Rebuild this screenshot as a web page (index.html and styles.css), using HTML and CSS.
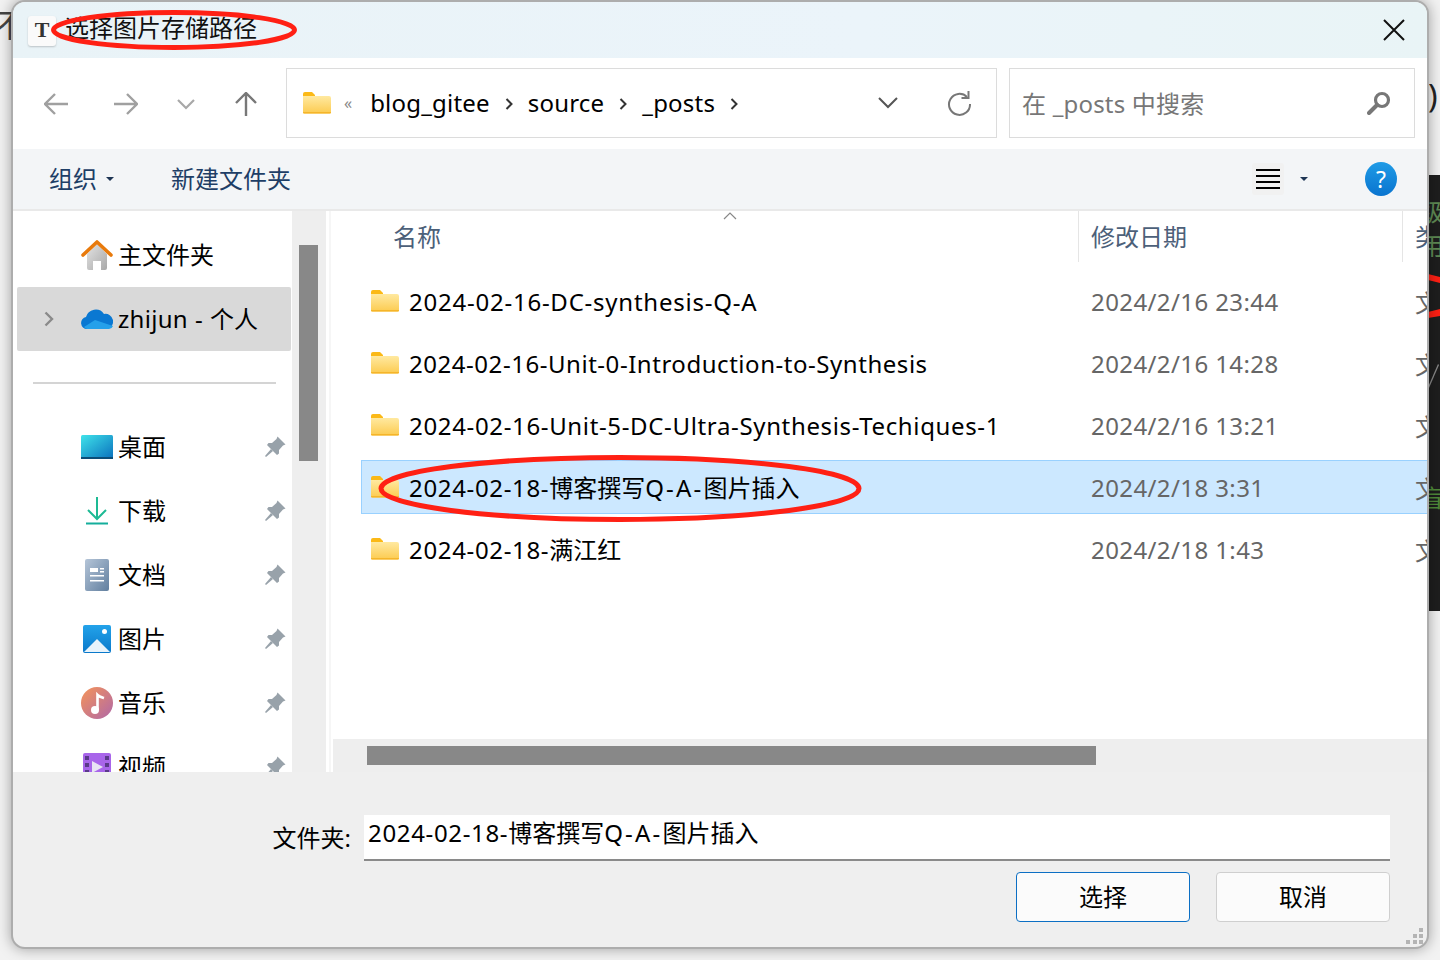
FILE: index.html
```html
<!DOCTYPE html>
<html lang="zh">

<head>
    <meta charset="utf-8" />
    <title>选择图片存储路径</title>
    <link rel="stylesheet" href="styles.css">
</head>

<body>
    <svg class="defs" width="0" height="0">
        <defs>
            <linearGradient id="gFolder" x1="0" y1="0" x2="0" y2="1">
                <stop offset="0" stop-color="#ffe9a0" />
                <stop offset="1" stop-color="#fccb50" />
            </linearGradient>
            <linearGradient id="gHome" x1="0" y1="0" x2="1" y2="1">
                <stop offset="0" stop-color="#e3e3e3" />
                <stop offset="1" stop-color="#a8a8a8" />
            </linearGradient>
            <linearGradient id="gDesk" x1="0" y1="0" x2="1" y2="1">
                <stop offset="0" stop-color="#3fe3ea" />
                <stop offset="1" stop-color="#0a70bd" />
            </linearGradient>
            <linearGradient id="gDoc" x1="0" y1="0" x2="1" y2="1">
                <stop offset="0" stop-color="#b5c5d8" />
                <stop offset="1" stop-color="#617f9f" />
            </linearGradient>
            <linearGradient id="gPic" x1="0" y1="0" x2="0" y2="1">
                <stop offset="0" stop-color="#23a3ea" />
                <stop offset="1" stop-color="#0a78ca" />
            </linearGradient>
            <linearGradient id="gMusic" x1="0" y1="0" x2="1" y2="1">
                <stop offset="0" stop-color="#f59458" />
                <stop offset="1" stop-color="#b068a8" />
            </linearGradient>
            <symbol id="folder" viewBox="0 0 28 22">
                <path d="M0 2a2 2 0 0 1 2-2h7l3 3v2H0z" fill="#fbb917" />
                <path d="M0 4h26a2 2 0 0 1 2 2v14a1.500 1.500 0 0 1-1.500 1.500h-25A1.500 1.500 0 0 1 0 20z" fill="url(#gFolder)" />
                <path d="M0 20h28v.5a1 1 0 0 1-1 1H1a1 1 0 0 1-1-1z" fill="#f5b52a" />
            </symbol>
            <symbol id="pin" viewBox="0 0 22 22">
                <path d="M13.500.5l8 8-2.500 1-4 4.500v3.500l-2 1.500-10-10 1.500-2H8l4.500-4z" fill="#98a2aa" />
                <path d="M7 13l-6 7 1 1 7-6z" fill="#98a2aa" />
            </symbol>
        </defs>
    </svg>

    <!-- 背后的窗口 -->
    <div class="behind-glyph">不</div>
    <div class="behind-paren">)</div>
    <div class="behind-panel">
        <div class="behind-green">级<br>用</div>
        <div class="behind-green behind-green-2">盲</div>
        <svg class="behind-strokes" width="12" height="436" viewBox="0 0 12 436">
            <path d="M0 99l12 3v6L0 105z" fill="#ff2014" />
            <path d="M0 137l12-3v7L0 143z" fill="#ff2014" />
            <path d="M0 212l10-23 1 1-10 23z" fill="#8a8a8a" />
        </svg>
    </div>

    <div class="dialog">
        <div class="titlebar">
            <div class="app-icon">T</div>
            <div class="title-text">选择图片存储路径</div>
            <svg class="close-icon" width="22" height="22" viewBox="0 0 22 22">
                <path d="M1 1l20 20M21 1L1 21" stroke="#111" stroke-width="2" fill="none" />
            </svg>
        </div>

        <div class="navbar">
            <svg class="nav-btn" width="24" height="24" viewBox="0 0 24 24">
                <path d="M24 12H1M11 2L1 12l10 10" stroke="#a0a0a0" stroke-width="2.400" fill="none" />
            </svg>
            <svg class="nav-btn nav-forward" width="24" height="24" viewBox="0 0 24 24">
                <path d="M0 12h23M13 2l10 10-10 10" stroke="#a0a0a0" stroke-width="2.400" fill="none" />
            </svg>
            <svg class="nav-btn nav-down" width="18" height="12" viewBox="0 0 18 12">
                <path d="M1 2l8 8 8-8" stroke="#a8a8a8" stroke-width="2.200" fill="none" />
            </svg>
            <svg class="nav-btn nav-up" width="24" height="24" viewBox="0 0 24 24">
                <path d="M12 24V1M2 11L12 1l10 10" stroke="#787878" stroke-width="2.400" fill="none" />
            </svg>

            <div class="address">
                <svg class="addr-folder" width="28" height="22"><use href="#folder" /></svg>
                <span class="addr-more">«</span>
                <span class="crumb">blog_gitee</span>
                <svg class="crumb-sep" width="8" height="12" viewBox="0 0 8 12"><path d="M1.500 1l5 5-5 5" stroke="#333" stroke-width="2" fill="none" /></svg>
                <span class="crumb">source</span>
                <svg class="crumb-sep" width="8" height="12" viewBox="0 0 8 12"><path d="M1.500 1l5 5-5 5" stroke="#333" stroke-width="2" fill="none" /></svg>
                <span class="crumb">_posts</span>
                <svg class="crumb-sep" width="8" height="12" viewBox="0 0 8 12"><path d="M1.500 1l5 5-5 5" stroke="#333" stroke-width="2" fill="none" /></svg>
                <svg class="addr-down" width="20" height="12" viewBox="0 0 20 12"><path d="M1 1l9 9 9-9" stroke="#555" stroke-width="2" fill="none" /></svg>
                <svg class="addr-refresh" width="24" height="26" viewBox="0 0 24 26">
                    <path d="M20 7a10.500 10.500 0 1 0 3 7" stroke="#777" stroke-width="2" fill="none" />
                    <path d="M21.500 1v7h-7" stroke="#777" stroke-width="2" fill="none" />
                </svg>
            </div>

            <div class="search">
                <span class="search-text">在 _posts 中搜索</span>
                <svg width="24" height="24" viewBox="0 0 24 24">
                    <circle cx="15" cy="9" r="6.500" stroke="#777" stroke-width="3.200" fill="none" />
                    <path d="M10 14l-8 8" stroke="#777" stroke-width="4" stroke-linecap="round" />
                </svg>
            </div>
        </div>

        <div class="toolbar">
            <span class="tool-text">组织</span>
            <span class="caret caret-org"></span>
            <span class="tool-text tool-new">新建文件夹</span>
            <div class="view-btn">
                <span class="view-line"></span>
                <span class="view-line"></span>
                <span class="view-line"></span>
                <span class="view-line"></span>
            </div>
            <span class="caret caret-view"></span>
            <div class="help-btn">?</div>
        </div>

        <div class="main">
            <div class="sidebar">
                <div class="side-row">
                    <svg class="side-icon" width="32" height="32" viewBox="0 0 32 32">
                        <path d="M6 15L16 5l10 10v14a2 2 0 0 1-2 2h-4v-9h-8v9H8a2 2 0 0 1-2-2z" fill="url(#gHome)" />
                        <path d="M2 16L16 3l14 13" stroke="#e87a0c" stroke-width="3.600" fill="none" stroke-linecap="round" stroke-linejoin="round" />
                    </svg>
                    <span class="side-label">主文件夹</span>
                </div>
                <div class="side-row side-active">
                    <svg class="side-arrow" width="10" height="16" viewBox="0 0 10 16">
                        <path d="M1.500 1.500L8 8l-6.500 6.500" stroke="#8a8a8a" stroke-width="2.400" fill="none" />
                    </svg>
                    <svg class="side-icon" width="32" height="22" viewBox="0 0 32 22">
                        <path d="M6 21a6 6 0 0 1-1-11.900A10 10 0 0 1 23 6a7 7 0 0 1 3 15z" fill="#0a78d2" />
                        <path d="M6 21a5.500 5.500 0 0 1-3-2l11-7 18 6a4.500 4.500 0 0 1-4 3z" fill="#25a0ea" />
                    </svg>
                    <span class="side-label side-latin">zhijun - <span class="cjk">个人</span></span>
                </div>
                <div class="side-divider"></div>
                <div class="side-row">
                    <svg class="side-icon" width="32" height="24" viewBox="0 0 32 24">
                        <rect width="32" height="24" rx="1.500" fill="url(#gDesk)" />
                        <rect y="22" width="32" height="2" fill="#0b4d78" />
                    </svg>
                    <span class="side-label">桌面</span>
                    <svg class="pin"><use href="#pin" /></svg>
                </div>
                <div class="side-row">
                    <svg class="side-icon" width="32" height="28" viewBox="0 0 32 28">
                        <path d="M16 0v22M7 13l9 9 9-9" stroke="#1dba94" stroke-width="2" fill="none" />
                        <rect x="5" y="25.500" width="22" height="2" fill="#14ae9c" />
                    </svg>
                    <span class="side-label">下载</span>
                    <svg class="pin"><use href="#pin" /></svg>
                </div>
                <div class="side-row">
                    <svg class="side-icon" width="32" height="32" viewBox="0 0 32 32">
                        <rect x="4" width="24" height="32" rx="2" fill="url(#gDoc)" />
                        <path d="M9 9h8v4H9zM19 9h4v1.500h-4zM19 12h4v1.500h-4zM9 16h14v1.500H9zM9 21h14v1.500H9z" fill="#fff" />
                    </svg>
                    <span class="side-label">文档</span>
                    <svg class="pin"><use href="#pin" /></svg>
                </div>
                <div class="side-row">
                    <svg class="side-icon" width="32" height="28" viewBox="0 0 32 28">
                        <rect x="2" width="28" height="28" rx="2" fill="url(#gPic)" />
                        <circle cx="23.500" cy="6.500" r="2.500" fill="#fff" />
                        <path d="M3 27l13-13 13 13z" fill="#e8f3fb" />
                    </svg>
                    <span class="side-label">图片</span>
                    <svg class="pin"><use href="#pin" /></svg>
                </div>
                <div class="side-row">
                    <svg class="side-icon" width="32" height="32" viewBox="0 0 32 32">
                        <circle cx="16" cy="16" r="16" fill="url(#gMusic)" />
                        <circle cx="14" cy="23" r="4" fill="#fff" />
                        <path d="M16.500 23V8c2 2 5 2.500 6.500 3" stroke="#fff" stroke-width="2.600" fill="none" />
                    </svg>
                    <span class="side-label">音乐</span>
                    <svg class="pin"><use href="#pin" /></svg>
                </div>
                <div class="side-row">
                    <svg class="side-icon" width="32" height="28" viewBox="0 0 32 28">
                        <rect x="2" width="28" height="28" rx="2" fill="#a865ea" />
                        <path d="M4 3h4v4H4zM4 10h4v4H4zM4 17h4v4H4zM24 3h4v4h-4zM24 10h4v4h-4zM24 17h4v4h-4z" fill="#5a3a8a" />
                        <path d="M11 8l11 6-11 6z" fill="#e8e4f4" />
                    </svg>
                    <span class="side-label">视频</span>
                    <svg class="pin"><use href="#pin" /></svg>
                </div>
            </div>

            <div class="side-scroll">
                <div class="side-thumb"></div>
            </div>

            <div class="list">
                <svg class="sort-arrow" width="14" height="8" viewBox="0 0 14 8">
                    <path d="M1 7l6-6 6 6" stroke="#888" stroke-width="1.200" fill="none" />
                </svg>
                <div class="list-head">
                    <div class="head-name">名称</div>
                    <div class="head-date">修改日期</div>
                    <div class="head-type">类型</div>
                </div>
                <div class="rows">
                    <div class="file-row">
                        <div class="file-name name-wide"><svg width="28" height="22"><use href="#folder" /></svg><span>2024-02-16-DC-synthesis-Q-A</span></div>
                        <div class="file-date">2024/2/16 23:44</div>
                        <div class="file-type">文件夹</div>
                    </div>
                    <div class="file-row">
                        <div class="file-name name-tight"><svg width="28" height="22"><use href="#folder" /></svg><span>2024-02-16-Unit-0-Introduction-to-Synthesis</span></div>
                        <div class="file-date">2024/2/16 14:28</div>
                        <div class="file-type">文件夹</div>
                    </div>
                    <div class="file-row">
                        <div class="file-name"><svg width="28" height="22"><use href="#folder" /></svg><span>2024-02-16-Unit-5-DC-Ultra-Synthesis-Techiques-1</span></div>
                        <div class="file-date">2024/2/16 13:21</div>
                        <div class="file-type">文件夹</div>
                    </div>
                    <div class="file-row file-selected">
                        <div class="file-name name-cjk"><svg width="28" height="22"><use href="#folder" /></svg><span>2024-02-18-<span class="cjk">博客撰写</span><span class="qa">Q-A-</span><span class="cjk">图片插入</span></span></div>
                        <div class="file-date">2024/2/18 3:31</div>
                        <div class="file-type">文件夹</div>
                    </div>
                    <div class="file-row">
                        <div class="file-name name-cjk"><svg width="28" height="22"><use href="#folder" /></svg><span>2024-02-18-<span class="cjk">满江红</span></span></div>
                        <div class="file-date">2024/2/18 1:43</div>
                        <div class="file-type">文件夹</div>
                    </div>
                </div>
                <div class="h-scroll">
                    <div class="h-thumb"></div>
                </div>
            </div>
        </div>

        <div class="bottom">
            <div class="folder-row">
                <span class="folder-label">文件夹:</span>
                <div class="folder-input"><span>2024-02-18-<span class="cjk">博客撰写</span><span class="qa">Q-A-</span><span class="cjk">图片插入</span></span></div>
            </div>
            <div class="button-row">
                <div class="btn btn-primary"><span class="btn-text">选择</span></div>
                <div class="btn"><span class="btn-text">取消</span></div>
            </div>
            <svg class="grip" width="18" height="16" viewBox="0 0 18 16">
                <path d="M13 0h4v4h-4zM7 6h4v4H7zM13 6h4v4h-4zM0 12h4v4H0zM7 12h4v4H7zM13 12h4v4h-4z" fill="#b4b4b4" />
            </svg>
        </div>
    </div>

    <!-- 红色圈注 -->
    <svg class="marks" width="1440" height="960" viewBox="0 0 1440 960">
        <ellipse cx="174" cy="30" rx="120.500" ry="17.500" stroke="#ff2014" stroke-width="5" fill="none" />
        <ellipse cx="620" cy="488.500" rx="239" ry="31" stroke="#ff2014" stroke-width="5" fill="none" />
    </svg>
</body>

</html>
```

FILE: styles.css
```css
* {
    box-sizing: border-box;
}

html,
body {
    margin: 0;
    height: 100%;
}

body {
    position: relative;
    width: 1440px;
    height: 960px;
    overflow: hidden;
    background-color: #f2f2f2;
    font-family: "Noto Sans", "Noto Sans CJK SC", sans-serif;
    font-size: 24px;
    color: #000;
}

.defs {
    position: absolute;
}

.cjk {
    letter-spacing: 0;
}

.qa {
    letter-spacing: 2.200px;
}

/* Cửa sổ phía sau */
.behind-glyph {
    position: absolute;
    left: -6px;
    top: 0;
    font-size: 32px;
    color: #444;
}

.behind-paren {
    position: absolute;
    left: 1428px;
    top: 74px;
    font-size: 32px;
    color: #222;
}

.behind-panel {
    position: absolute;
    left: 1428px;
    top: 175px;
    width: 12px;
    height: 436px;
    background-color: #1e1e1e;
    overflow: hidden;
}

.behind-green {
    position: absolute;
    left: -8px;
    top: 20px;
    font-size: 24px;
    line-height: 34px;
    color: #5f8a55;
}

.behind-green-2 {
    top: 306px;
    color: #4f8a3a;
}

.behind-strokes {
    position: absolute;
    left: 0;
    top: 0;
}

/* Hộp thoại */
.dialog {
    position: absolute;
    left: 11px;
    top: 0;
    width: 1418px;
    height: 949px;
    display: flex;
    flex-direction: column;
    background-color: #efefef;
    border: 2px solid #adadad;
    border-radius: 14px;
    box-shadow: 0 0 14px rgba(0, 0, 0, 0.35);
    overflow: hidden;
}

.titlebar {
    flex: 0 0 56px;
    display: flex;
    align-items: center;
    padding: 0 22px 0 15px;
    background: linear-gradient(90deg, #e9f3f7, #ebf4fa 60%, #e9f4f6);
}

.app-icon {
    width: 28px;
    height: 30px;
    margin-top: 2px;
    background-color: #fafafa;
    border-radius: 3px;
    box-shadow: 0 1px 2px rgba(0, 0, 0, 0.2);
    font-family: "Liberation Serif", serif;
    font-size: 22px;
    font-weight: bold;
    line-height: 28px;
    text-align: center;
    color: #333;
}

.title-text {
    margin-left: 9px;
    flex: 1;
    line-height: 52px;
    height: 56px;
    color: #111;
}

.navbar {
    flex: 0 0 91px;
    display: flex;
    align-items: center;
    padding: 0 12px 1px 31px;
    background-color: #fff;
}

.nav-btn {
    margin-top: 2px;
}

.nav-forward {
    margin-left: 46px;
}

.nav-down {
    margin-left: 39px;
}

.nav-up {
    margin-left: 39px;
}

.address {
    width: 711px;
    height: 70px;
    margin-left: 28px;
    display: flex;
    align-items: center;
    padding: 0 25px 0 16px;
    border: 1px solid #dcdcdc;
}

.addr-more {
    margin: 0 18px 0 13px;
    font-size: 16px;
    color: #888;
}

.crumb {
    letter-spacing: 0.2px;
    margin-bottom: 2px;
}

.crumb-sep {
    margin: 2px 15px 0 15px;
}

.addr-down {
    margin-left: auto;
}

.addr-refresh {
    margin-left: 49px;
}

.search {
    flex: 1;
    height: 70px;
    margin-left: 12px;
    display: flex;
    align-items: center;
    justify-content: space-between;
    padding: 0 23px 0 12px;
    border: 1px solid #dcdcdc;
    color: #777;
}

.search-text {
    margin-bottom: 2px;
    letter-spacing: 0.2px;
}

.toolbar {
    flex: 0 0 62px;
    display: flex;
    align-items: center;
    padding: 0 30px 0 36px;
    background-color: #f3f5f7;
    border-bottom: 2px solid #e9e9e9;
}

.tool-text {
    color: #1e3e66;
    margin-bottom: 4px;
}

.caret {
    width: 0;
    height: 0;
    border-left: 4px solid transparent;
    border-right: 4px solid transparent;
    border-top: 4px solid #1e3554;
}

.caret-org {
    margin-left: 9px;
}

.tool-new {
    margin-left: 57px;
}

.view-btn {
    width: 32px;
    height: 32px;
    margin-left: auto;
    margin-right: 2px;
    display: flex;
    flex-direction: column;
    justify-content: center;
    gap: 4.300px;
    padding: 0 4px;
    background-color: #f1f1f1;
    border-radius: 3px;
}

.view-line {
    height: 2px;
    background-color: #000;
}

.caret-view {
    margin-left: 14px;
}

.help-btn {
    width: 32px;
    height: 34px;
    margin-left: 57px;
    border-radius: 50%;
    background: linear-gradient(#1f9be6, #0a74cf);
    font-size: 23px;
    line-height: 34px;
    text-align: center;
    color: #fff;
}

.main {
    flex: 0 0 561px;
    min-height: 0;
    display: flex;
    background-color: #fff;
}

.sidebar {
    flex: 0 0 279px;
    padding-top: 12px;
    overflow: hidden;
    background-color: #fff;
}

.side-row {
    position: relative;
    height: 64px;
    display: flex;
    align-items: center;
    margin: 0 1px 0 4px;
    padding-left: 64px;
    border-radius: 2px;
}

.side-label {
    margin-bottom: 4px;
}

.side-latin {
    letter-spacing: 0.3px;
    word-spacing: 0.5px;
}

.side-active {
    background-color: #d9d9d9;
}

.side-icon {
    flex: 0 0 32px;
    margin-right: 5px;
}

.side-arrow {
    position: absolute;
    left: 27px;
    top: 24px;
}

.side-divider {
    height: 64px;
    margin: 0 16px 0 20px;
    position: relative;
}

.side-divider::after {
    content: "";
    position: absolute;
    left: 0;
    right: 0;
    top: 31px;
    height: 2px;
    background-color: #d4d4d4;
}

.pin {
    width: 22px;
    height: 22px;
    margin-left: auto;
    margin-right: 5px;
}

.side-scroll {
    flex: 0 0 34px;
    padding: 34px 8px 0 7px;
    background-color: #eeeeee;
}

.side-thumb {
    height: 216px;
    background-color: #888;
}

.list {
    position: relative;
    flex: 1;
    display: flex;
    flex-direction: column;
    margin-left: 3px;
    padding-left: 6px;
    min-width: 0;
    overflow: hidden;
    border-left: 2px solid #f6f6f6;
    background-color: #fff;
}

.sort-arrow {
    position: absolute;
    left: 392px;
    top: 1px;
}

.list-head {
    flex: 0 0 51px;
    display: flex;
    line-height: 51px;
    color: #4c6079;
    white-space: nowrap;
}

.head-name {
    flex: 0 0 742px;
    padding-left: 56px;
    border-right: 1px solid #e5e5e5;
}

.head-date {
    flex: 0 0 324px;
    padding-left: 12px;
    border-right: 1px solid #e5e5e5;
}

.head-type {
    padding-left: 12px;
}

.rows {
    flex: 1;
    min-height: 0;
    padding: 12px 0 0 24px;
}

.file-row {
    height: 54px;
    margin-bottom: 8px;
    display: flex;
    align-items: center;
    white-space: nowrap;
    border: 1px solid transparent;
    border-right: none;
}

.file-selected {
    background-color: #cce8ff;
    border-color: #99d1ff;
}

.file-name {
    flex: 0 0 729px;
    display: flex;
    align-items: center;
    gap: 10px;
    padding-left: 9px;
    letter-spacing: 0.65px;
}

.name-wide {
    letter-spacing: 0.76px;
}

.name-tight {
    letter-spacing: 0.54px;
}

.name-cjk span {
    margin-bottom: 1px;
}

.file-date {
    flex: 0 0 324px;
    color: #666;
    letter-spacing: 0.4px;
}

.file-type {
    color: #666;
}

.h-scroll {
    flex: 0 0 33px;
    padding: 7px 0 0 34px;
    margin-left: -4px;
    background-color: #eeeeee;
}

.h-thumb {
    width: 729px;
    height: 19px;
    background-color: #888;
}

.bottom {
    position: relative;
    flex: 1;
    padding: 43px 37px 0 0;
}

.folder-row {
    display: flex;
    align-items: center;
    justify-content: flex-end;
}

.folder-label {
    margin: 0 13px 4px 0;
}

.folder-input {
    width: 1026px;
    height: 46px;
    padding: 0 0 12px 4px;
    display: flex;
    align-items: center;
    background-color: #fff;
    border-bottom: 2px solid #8a8a8a;
    letter-spacing: 0.65px;
}

.button-row {
    display: flex;
    justify-content: flex-end;
    gap: 26px;
    margin-top: 11px;
}

.btn {
    width: 174px;
    height: 50px;
    display: flex;
    align-items: center;
    justify-content: center;
    background-color: #fbfbfb;
    border: 1px solid #cfcfcf;
    border-radius: 4px;
}

.btn-text {
    margin-bottom: 4px;
}

.btn-primary {
    border-color: #0c6fc4;
}

.grip {
    position: absolute;
    right: 3px;
    bottom: 3px;
}

.marks {
    position: absolute;
    left: 0;
    top: 0;
    pointer-events: none;
}
```
